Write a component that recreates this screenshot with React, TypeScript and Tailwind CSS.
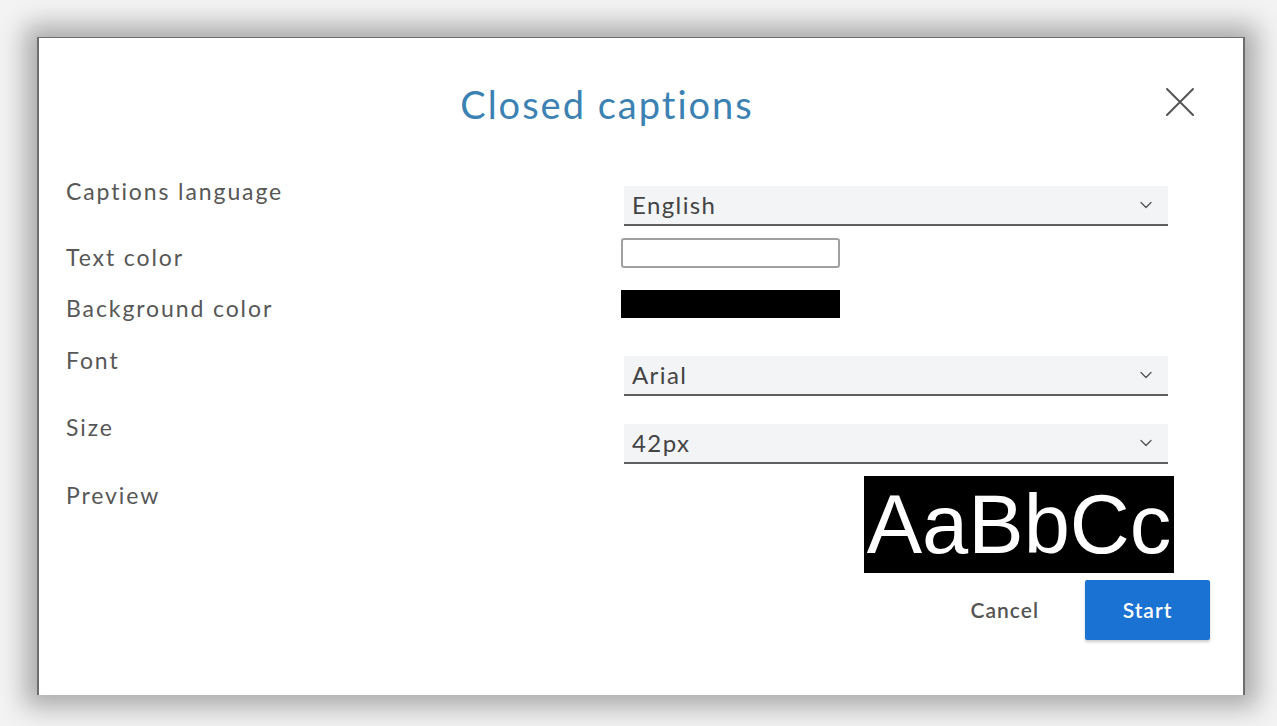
import { ChevronDown } from "lucide-react";

const font = { fontFamily: "Lato, 'Noto Sans', sans-serif" };

function Select({ value }: { value: string }) {
  return (
    <div className="ml-[3px] flex h-10 w-[544px] items-center justify-between border-b-2 border-[#5f5f5f] bg-[#f3f4f6] pl-2 pr-3">
      <span className="text-[24px] tracking-[1.4px] text-[#444]">{value}</span>
      <ChevronDown size={20} strokeWidth={1.6} className="text-[#555]" />
    </div>
  );
}

export default function App() {
  return (
    <div className="h-[726px] w-[1277px] overflow-hidden bg-[#f3f3f3] pl-[37px] pt-[37px]" style={font}>
      <div className="flex h-[658px] w-[1208px] flex-col border-x-2 border-t border-[#6d6d6d] bg-white shadow-[0_0_24px_12px_rgba(0,0,0,0.3)]">
        {/* Header */}
        <div className="relative flex h-[138px] items-start pt-[38px]">
          <h1 className="w-[1136px] text-center text-[38px] tracking-[2px] text-[#3b82b3]">Closed captions</h1>
          <button className="absolute right-[48px] top-[49px] text-[#555]">
            <svg width="30" height="30" viewBox="0 0 30 30" fill="none" stroke="currentColor" strokeWidth="2" strokeLinecap="round">
              <path d="M2 2 L28 28 M28 2 L2 28" />
            </svg>
          </button>
        </div>

        {/* Rows */}
        <div className="flex flex-col pl-[27px] text-[23px] tracking-[1.9px] text-[#575757]">
          <div className="flex h-[54px]">
            <span className="mt-[1px] w-[555px] leading-7">Captions language</span>
            <div className="mt-[10px]">
              <Select value="English" />
            </div>
          </div>
          <div className="flex h-[52px]">
            <span className="mt-[13px] w-[555px] leading-7">Text color</span>
            <div className="mt-[8px] h-[30px] w-[219px] rounded-[3px] border-2 border-[#a0a0a0] bg-white" />
          </div>
          <div className="flex h-[54px]">
            <span className="mt-[12px] w-[555px] leading-7">Background color</span>
            <div className="mt-[8px] h-[28px] w-[219px] bg-black" />
          </div>
          <div className="flex h-[68px]">
            <span className="mt-[10px] w-[555px] leading-7">Font</span>
            <div className="mt-[20px]">
              <Select value="Arial" />
            </div>
          </div>
          <div className="flex h-[66px]">
            <span className="mt-[9px] w-[555px] leading-7">Size</span>
            <div className="mt-[20px]">
              <Select value="42px" />
            </div>
          </div>
          <div className="flex h-[106px]">
            <span className="mt-[11px] w-[555px] leading-7">Preview</span>
            <div
              className="ml-[243px] mt-[6px] flex h-[97px] w-[310px] items-center justify-center bg-black text-[83px] leading-none tracking-normal text-white"
              style={{ fontFamily: "'Liberation Sans', Arial, sans-serif" }}
            >
              AaBbCc
            </div>
          </div>
        </div>

        {/* Footer */}
        <div className="flex items-center justify-end gap-[46px] pr-[33px] pt-[4px]">
          <button className="text-[21px] font-semibold tracking-[1px] text-[#555]">Cancel</button>
          <button className="h-[60px] w-[125px] rounded-[2px] bg-[#1a72d2] text-[21px] font-semibold tracking-[1px] text-white shadow-[0_2px_3px_rgba(0,0,0,0.2)]">
            Start
          </button>
        </div>
      </div>
    </div>
  );
}
